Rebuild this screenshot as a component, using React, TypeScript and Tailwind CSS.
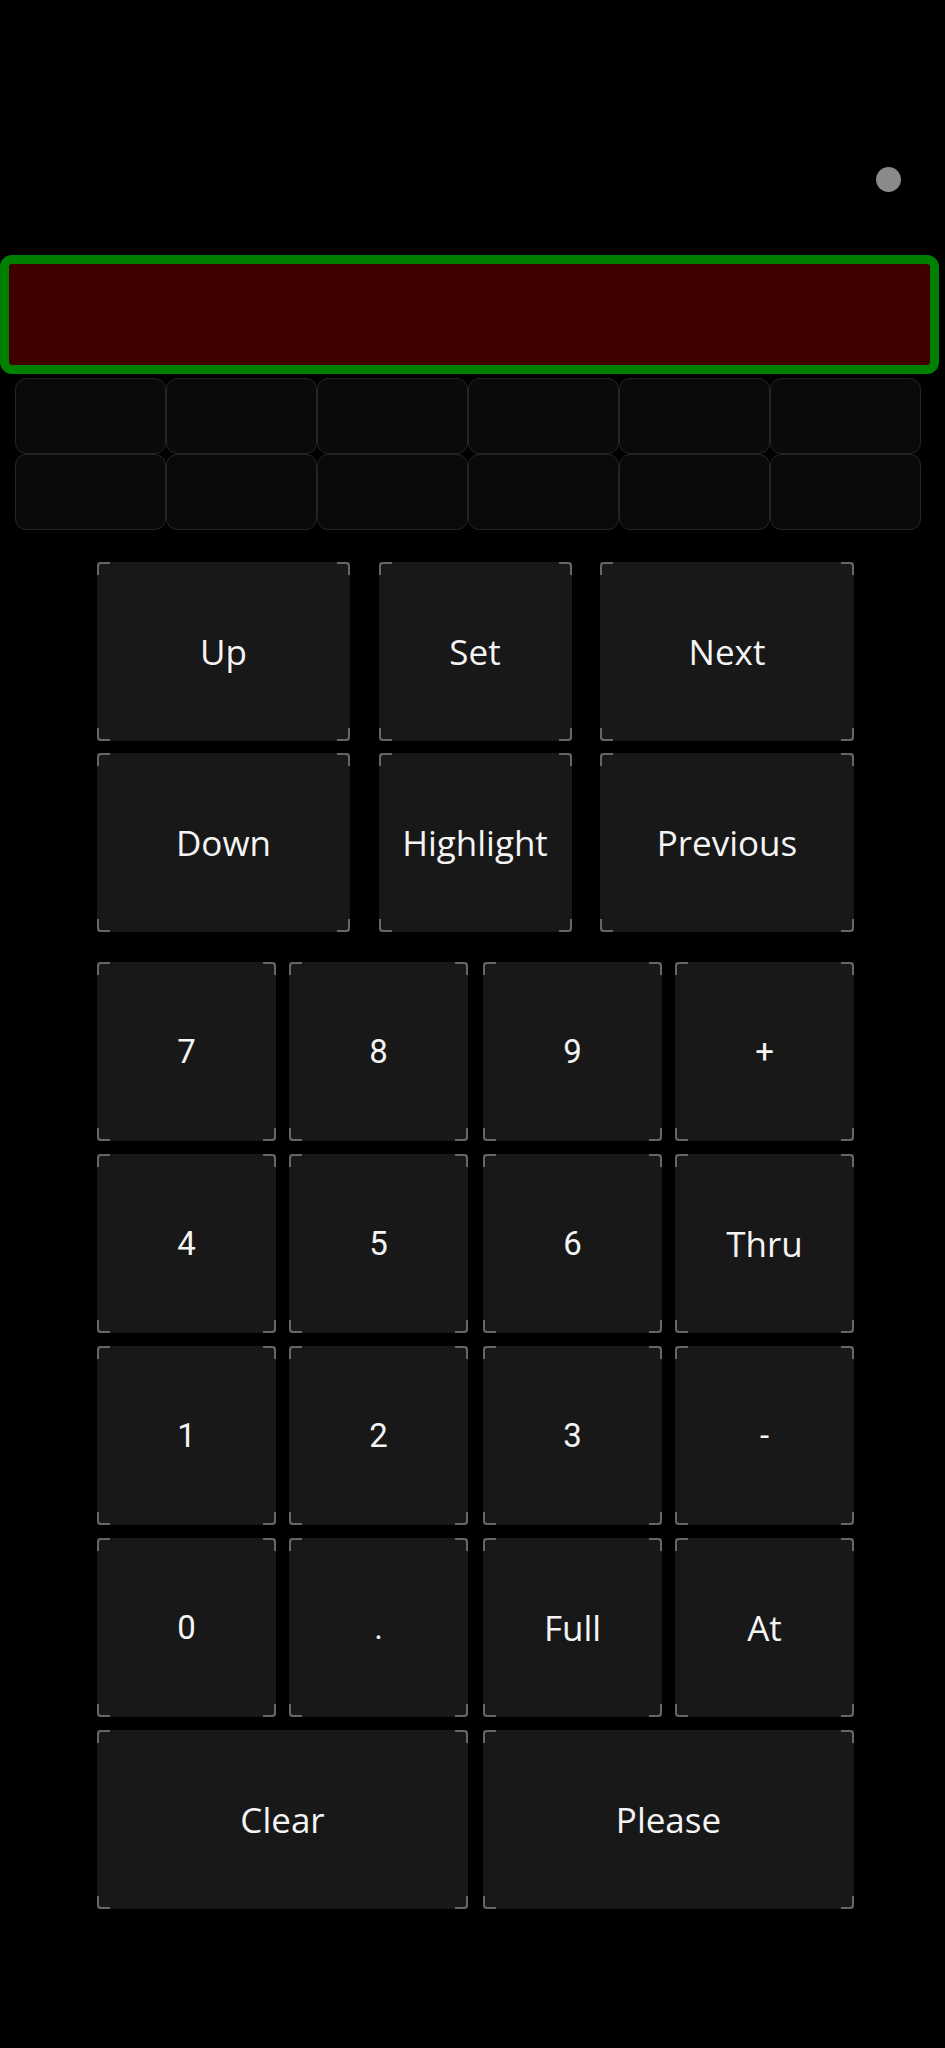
import React from "react";

const isNum = (s: string) => /^[0-9+\-.]$/.test(s);

function Corners() {
  return (
    <>
      <span className="pointer-events-none absolute left-0 top-0 h-[13px] w-[13px] rounded-tl-[4px] border-l-2 border-t-2 border-[#666666]" />
      <span className="pointer-events-none absolute right-0 top-0 h-[13px] w-[13px] rounded-tr-[4px] border-r-2 border-t-2 border-[#666666]" />
      <span className="pointer-events-none absolute bottom-0 left-0 h-[13px] w-[13px] rounded-bl-[4px] border-b-2 border-l-2 border-[#666666]" />
      <span className="pointer-events-none absolute bottom-0 right-0 h-[13px] w-[13px] rounded-br-[4px] border-b-2 border-r-2 border-[#666666]" />
    </>
  );
}

function Btn({ label, className = "" }: { label: string; className?: string }) {
  return (
    <button
      className={
        "relative flex h-[179px] items-center justify-center bg-[#181818] text-[#f4f4f4] " +
        (isNum(label)
          ? "font-['Roboto',sans-serif] text-[33px] "
          : "font-['Open_Sans','Noto_Sans',sans-serif] text-[35px] ") +
        className
      }
    >
      <span className="leading-none">{label}</span>
      <Corners />
    </button>
  );
}

function NumRow({ items }: { items: string[] }) {
  return (
    <div className="flex gap-[15px]">
      <div className="grid w-[371px] grid-cols-2 gap-[13px]">
        <Btn label={items[0]} />
        <Btn label={items[1]} />
      </div>
      <div className="grid w-[371px] grid-cols-2 gap-[13px]">
        <Btn label={items[2]} />
        <Btn label={items[3]} />
      </div>
    </div>
  );
}

export default function App() {
  const cells = Array.from({ length: 12 });
  return (
    <div className="min-h-[2048px] w-full bg-black">
      <div className="flex justify-end pr-[44px] pt-[167px]">
        <div className="h-[25px] w-[25px] rounded-full bg-[#8a8a8a]" />
      </div>

      <div className="mt-[63px] h-[119px] w-[939px] rounded-[12px] border-[9px] border-[#008000] bg-[#400000]" />

      <div className="ml-[15px] mt-[4px] grid w-[906px] grid-cols-6">
        {cells.map((_, i) => (
          <div
            key={i}
            className="h-[76px] rounded-[11px] border border-[#242424] bg-[#0a0a0a]"
          />
        ))}
      </div>

      <div className="ml-[97px] mt-[32px] w-[757px]">
        <div className="flex flex-col gap-[12px]">
          <div className="flex justify-between">
            <Btn label="Up" className="w-[253px]" />
            <Btn label="Set" className="w-[193px]" />
            <Btn label="Next" className="w-[254px]" />
          </div>
          <div className="flex justify-between">
            <Btn label="Down" className="w-[253px]" />
            <Btn label="Highlight" className="w-[193px]" />
            <Btn label="Previous" className="w-[254px]" />
          </div>
        </div>

        <div className="mt-[30px] flex flex-col gap-[13px]">
          <NumRow items={["7", "8", "9", "+"]} />
          <NumRow items={["4", "5", "6", "Thru"]} />
          <NumRow items={["1", "2", "3", "-"]} />
          <NumRow items={["0", ".", "Full", "At"]} />
          <div className="flex gap-[15px]">
            <Btn label="Clear" className="w-[371px]" />
            <Btn label="Please" className="w-[371px]" />
          </div>
        </div>
      </div>
    </div>
  );
}
